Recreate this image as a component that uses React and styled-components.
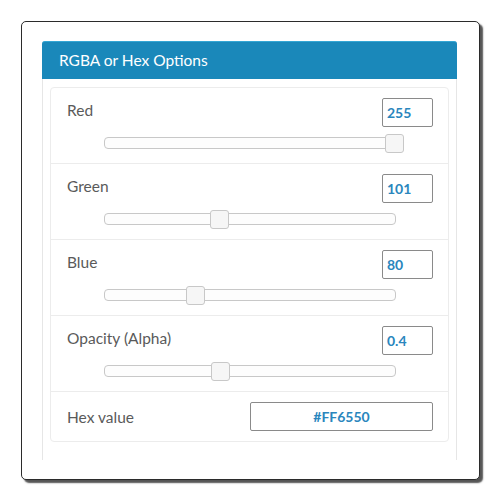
import styled, { createGlobalStyle } from "styled-components";

const GlobalStyle = createGlobalStyle`
  html, body {
    margin: 0;
    padding: 0;
    background: #ffffff;
    font-family: Lato, "Open Sans", sans-serif;
  }
`;

const channels = [
  { label: "Red", value: "255", ratio: 255 / 255 },
  { label: "Green", value: "101", ratio: 101 / 255 },
  { label: "Blue", value: "80", ratio: 80 / 255 },
  { label: "Opacity (Alpha)", value: "0.4", ratio: 0.4 },
];

const App = () => {
  return (
    <>
      <GlobalStyle />
      <Page>
        <Frame>
          <Panel>
            <Heading>RGBA or Hex Options</Heading>
            <Body>
              <List>
                {channels.map((c) => (
                  <Row key={c.label}>
                    <RowTop>
                      <Label>{c.label}</Label>
                      <ValueBox>{c.value}</ValueBox>
                    </RowTop>
                    <Track>
                      <Thumb style={{ left: `${c.ratio * 100}%` }} />
                    </Track>
                  </Row>
                ))}
                <HexRow>
                  <Label>Hex value</Label>
                  <HexBox>#FF6550</HexBox>
                </HexRow>
              </List>
            </Body>
          </Panel>
        </Frame>
      </Page>
    </>
  );
};

const Page = styled.div`
  width: 500px;
  height: 501px;
  padding: 21px 0 0 21px;
  box-sizing: border-box;
`;

const Frame = styled.div`
  width: 459px;
  height: 459px;
  box-sizing: border-box;
  border: 1.5px solid #2b2b2b;
  border-radius: 5px;
  box-shadow: 3px 3px 1.5px #555;
  padding: 19px 22px 19px 20px;
  overflow: hidden;
  background: #fff;
`;

const Panel = styled.div`
  height: 100%;
  display: flex;
  flex-direction: column;
  border: 1px solid #e6e6e6;
  border-top: none;
  border-bottom: none;
  border-radius: 3px 3px 0 0;
`;

const Heading = styled.div`
  height: 38px;
  margin: 0 -1px;
  box-sizing: border-box;
  display: flex;
  align-items: center;
  padding: 0 0 2px 17px;
  background: #1a88ba;
  border-top: 1px solid #34a6d4;
  border-radius: 3px 3px 0 0;
  color: #ffffff;
  font-size: 15.5px;
  font-weight: 400;
`;

const Body = styled.div`
  padding: 8px 7px 0 7px;
`;

const List = styled.div`
  border: 1px solid #ececec;
  border-radius: 4px;
`;

const Row = styled.div`
  height: 76px;
  box-sizing: border-box;
  padding: 10px 15px 0 16px;
  border-bottom: 1px solid #ececec;
`;

const RowTop = styled.div`
  display: flex;
  justify-content: space-between;
  align-items: flex-start;
`;

const Label = styled.div`
  color: #5a5a5a;
  font-size: 15.5px;
  line-height: 20px;
  padding-top: 2px;
`;

const ValueBox = styled.div`
  width: 51px;
  height: 29px;
  box-sizing: border-box;
  border: 1px solid #8a8a8a;
  border-radius: 2px;
  padding-left: 4px;
  display: flex;
  align-items: center;
  color: #2a86bd;
  font-size: 14px;
  font-weight: 700;
`;

const Track = styled.div`
  position: relative;
  height: 12px;
  box-sizing: border-box;
  margin: 10px 37px 0 37px;
  border: 1px solid #c8c8c8;
  border-radius: 4px;
  background: #fdfdfd;
`;

const Thumb = styled.div`
  position: absolute;
  top: -4px;
  width: 19px;
  height: 19px;
  margin-left: -10px;
  box-sizing: border-box;
  border: 1px solid #c8c8c8;
  border-radius: 3px;
  background: #f6f6f6;
`;

const HexRow = styled.div`
  height: 49px;
  box-sizing: border-box;
  padding: 0 15px 0 16px;
  display: flex;
  align-items: center;
  justify-content: space-between;

  ${Label} {
    padding-top: 0;
  }
`;

const HexBox = styled.div`
  width: 183px;
  height: 29px;
  box-sizing: border-box;
  border: 1px solid #8a8a8a;
  border-radius: 2px;
  display: flex;
  align-items: center;
  justify-content: center;
  color: #2a86bd;
  font-size: 14px;
  font-weight: 700;
`;

export default App;
